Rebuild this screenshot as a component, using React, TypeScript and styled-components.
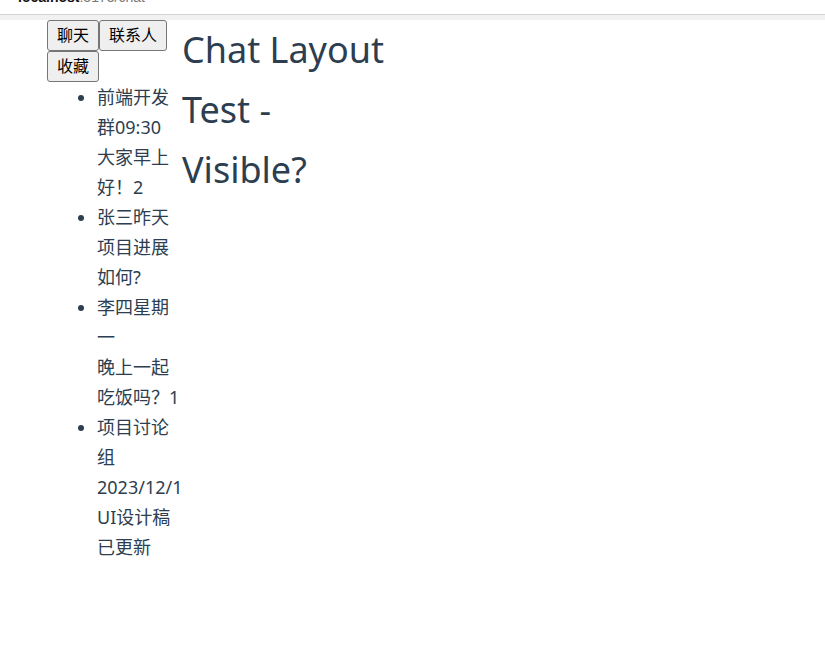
import React from "react";
import styled, { createGlobalStyle } from "styled-components";

const Global = createGlobalStyle`
  html, body { margin: 0; padding: 0; background: #fff; }
  body { font-family: "Noto Sans", "Noto Sans CJK SC", sans-serif; color: #2c3e50; }
`;

const AddressBar = styled.div`
  height: 14px;
  overflow: hidden;
  padding-left: 18px;
  border-bottom: 1px solid #d4d4d4;
  font-family: "Liberation Sans", sans-serif;
  font-size: 14px;
  line-height: 16px;
`;

const AddressText = styled.div`
  margin-top: -11px;
  color: #111;
  font-weight: 700;
  white-space: nowrap;
`;

const Muted = styled.span`
  color: #777;
  font-weight: 400;
`;

const Strip = styled.div`
  height: 5px;
  background: #f1f1f1;
`;

const Layout = styled.div`
  display: flex;
  align-items: flex-start;
  padding-left: 47px;
`;

const Sidebar = styled.aside`
  width: 133px;
  flex-shrink: 0;
`;

const Tabs = styled.nav`
  line-height: 0;
`;

const Tab = styled.button`
  font-family: "Noto Sans", "Noto Sans CJK SC", sans-serif;
  font-size: 16px;
  line-height: 21px;
  padding: 4px 9px;
  margin: 0;
  color: #000;
  background: #efefef;
  border: 1px solid #767676;
  border-radius: 3px;
  vertical-align: top;
`;

const List = styled.ul`
  margin: 0;
  padding-left: 50px;
  font-size: 18px;
  line-height: 30px;
`;

const Item = styled.li``;

const Badge = styled.span``;

const Main = styled.main`
  width: 215px;
  padding-left: 2px;
`;

const Title = styled.h1`
  margin: 0;
  font-size: 36px;
  font-weight: 400;
  line-height: 60px;
`;

const chats = [
  { name: "前端开发群", time: "09:30", msg: "大家早上好！", badge: "2" },
  { name: "张三", time: "昨天", msg: "项目进展如何?", badge: "" },
  { name: "李四", time: "星期一", msg: "晚上一起吃饭吗？", badge: "1" },
  { name: "项目讨论组", time: "2023/12/1", msg: "UI设计稿已更新", badge: "" },
];

export default function App() {
  return (
    <>
      <Global />
      <AddressBar>
        <AddressText>
          localhost<Muted>:5173/chat</Muted>
        </AddressText>
      </AddressBar>
      <Strip />
      <Layout>
        <Sidebar>
          <Tabs>
            <Tab>聊天</Tab>
            <Tab>联系人</Tab>
            <Tab>收藏</Tab>
          </Tabs>
          <List>
            {chats.map((c) => (
              <Item key={c.name}>
                <div>
                  <span>{c.name}</span>
                  <span>{c.time}</span>
                </div>
                <div>
                  <span>{c.msg}</span>
                  {c.badge && <Badge>{c.badge}</Badge>}
                </div>
              </Item>
            ))}
          </List>
        </Sidebar>
        <Main>
          <Title>Chat Layout Test - Visible?</Title>
        </Main>
      </Layout>
    </>
  );
}
